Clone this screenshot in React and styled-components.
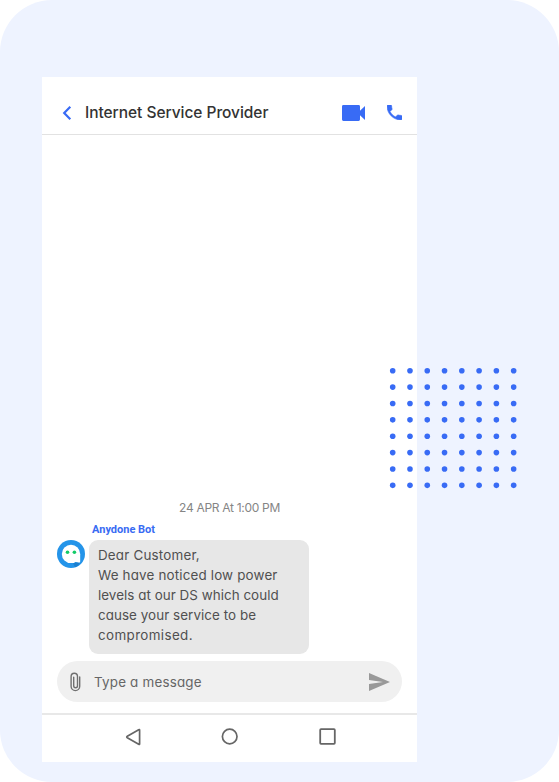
import React from "react";
import styled, { createGlobalStyle } from "styled-components";

const GlobalStyle = createGlobalStyle`
  * { box-sizing: border-box; }
  body { margin: 0; background: #fff; font-family: Inter, "Liberation Sans", sans-serif; font-feature-settings: "cv11" 1; }
  svg { display: block; }
`;

const Backdrop = styled.main`
  width: 559px;
  height: 782px;
  padding: 77px 0 0 42px;
  border-radius: 52px;
  background: #eef3ff;
  position: relative;
`;

const Phone = styled.section`
  width: 375px;
  height: 685px;
  display: flex;
  flex-direction: column;
  background: #fff;
`;

const Header = styled.header`
  height: 58px;
  flex: none;
  display: flex;
  align-items: center;
  padding: 14px 15px 0 20px;
  border-bottom: 1px solid #e2e2e2;
`;

const IconButton = styled.button`
  display: block;
  padding: 0;
  border: 0;
  background: none;
  margin-left: ${(p) => p.$gap || 0}px;
`;

const Title = styled.h1`
  flex: 1;
  margin: 0 0 0 13px;
  font-size: 15.5px;
  line-height: 22px;
  font-weight: 500;
  letter-spacing: ${(p) => p.$spacing}px;
  white-space: nowrap;
  color: #333;
`;

const Messages = styled.div`
  flex: 1;
  display: flex;
  flex-direction: column;
  justify-content: flex-end;
  padding: 0 15px 7px;
`;

const DateLabel = styled.time`
  align-self: center;
  font-size: 12px;
  line-height: 18px;
  letter-spacing: ${(p) => p.$spacing}px;
  color: #858585;
`;

const Sender = styled.div`
  margin: 5px 0 2px 35px;
  font: 700 11px/16px Roboto, sans-serif;
  letter-spacing: ${(p) => p.$spacing}px;
  color: #386bf3;
`;

const MessageRow = styled.div`
  display: flex;
  align-items: flex-start;
  gap: 4px;
`;

const Bubble = styled.div`
  width: 220px;
  height: 114px;
  padding: 5px 9px;
  border-radius: 9px;
  background: #e7e7e7;
`;

const Line = styled.div`
  font-size: 13.4px;
  line-height: 20px;
  letter-spacing: ${(p) => p.$spacing}px;
  white-space: nowrap;
  color: #505050;
`;

const Composer = styled.div`
  height: 41px;
  flex: none;
  margin: 0 15px 11px;
  padding: 0 12px 0 11px;
  display: flex;
  align-items: center;
  border-radius: 21px;
  background: #f0f0f0;
`;

const Placeholder = styled.span`
  flex: 1;
  margin-left: 12px;
  font-size: 13.4px;
  line-height: 20px;
  letter-spacing: ${(p) => p.$spacing}px;
  color: #666;
`;

const NavBar = styled.nav`
  height: 49px;
  flex: none;
  display: flex;
  align-items: center;
  justify-content: space-between;
  padding: 0 81px 4px 83px;
  border-top: 2px solid #e8e8e8;
`;

const DotPattern = styled.svg`
  position: absolute;
  left: 389px;
  top: 367px;
`;

const BackIcon = () => (
  <svg width="10" height="16" viewBox="0 0 10 16" fill="none" stroke="#386bf5" strokeWidth="2.2">
    <path d="M8.3 1.7 2.2 8l6.1 6.3" />
  </svg>
);

const VideoIcon = () => (
  <svg width="23" height="16" viewBox="0 0 23 16" fill="#386bf5">
    <path d="M1.4 0h15.2Q18 0 18 1.4v4.3L23 1v14l-5-4.7v4.3q0 1.4-1.4 1.4H1.4Q0 16 0 14.6V1.4Q0 0 1.4 0Z" />
  </svg>
);

const PhoneIcon = () => (
  <svg width="15" height="15" viewBox="3 3 18 18" fill="#386bf5" stroke="#386bf5" strokeWidth=".8">
    <path d="M6.62 10.79c1.44 2.83 3.76 5.14 6.59 6.59l2.2-2.2c.27-.27.67-.36 1.02-.24 1.12.37 2.33.57 3.57.57.55 0 1 .45 1 1V20c0 .55-.45 1-1 1C10.61 21 3 13.39 3 4c0-.55.45-1 1-1h3.5c.55 0 1 .45 1 1 0 1.25.2 2.45.57 3.57.11.35.03.74-.25 1.02z" />
  </svg>
);

const BotAvatar = () => (
  <svg width="28" height="29" viewBox="0 0 28 29">
    <circle cx="14" cy="14" r="14" fill="#2494e9" />
    <path d="M16 23.3 22 21.7l.7 1.1-1.7 3a14 14 0 0 1-3 1.4Z" fill="#1c80cf" />
    <circle cx="14" cy="13.9" r="9.2" fill="#fff" />
    <path d="M23.2 13.9v7.6q0 1.3-1.5 1.1L16 21.5Z" fill="#fff" />
    <circle cx="10.5" cy="12.2" r="1.8" fill="#12cb68" />
    <circle cx="17.4" cy="12.2" r="1.8" fill="#12cb68" />
  </svg>
);

const ClipIcon = () => (
  <svg width="14" height="20" viewBox="0 0 14 20" fill="none" stroke="#707070" strokeWidth="1.4" strokeLinecap="round">
    <path d="M11.7 5v9.3a4.3 4.3 0 0 1-8.6 0V4.4a3.2 3.2 0 0 1 6.4 0v9.4a1.9 1.9 0 0 1-3.8 0V5.3" />
  </svg>
);

const SendIcon = () => (
  <svg width="21" height="18" viewBox="0 0 21 18" fill="#999">
    <path d="M0 0 21 9 0 18v-7l14-2L0 7Z" />
  </svg>
);

const TriangleIcon = () => (
  <svg width="16" height="18" viewBox="0 0 16 18" fill="none" stroke="#666" strokeWidth="1.7" strokeLinejoin="round">
    <path d="M14.6 2.1v13.8q0 .8-.9.4L2.3 9.7q-1.1-.7 0-1.4L13.7 1.7q.9-.4.9.4Z" />
  </svg>
);

const CircleIcon = () => (
  <svg width="17" height="17" viewBox=".8 0 17 17" fill="none" stroke="#666" strokeWidth="1.7" overflow="visible">
    <circle cx="8.5" cy="8.5" r="7.3" />
  </svg>
);

const SquareIcon = () => (
  <svg width="17" height="17" viewBox="0 0 17 17" fill="none" stroke="#666" strokeWidth="1.8">
    <rect x="1.2" y="1.2" width="14.6" height="14.6" rx=".8" />
  </svg>
);

const dots = Array.from({ length: 64 }, (_, i) => ({
  cx: 3.7 + (i % 8) * 17.28,
  cy: 3.7 + Math.floor(i / 8) * 16.38,
}));

const lines = [
  { text: "Dear Customer,", spacing: 0.2 },
  { text: "We have noticed low power", spacing: 0.17 },
  { text: "levels at our DS which could", spacing: 0.04 },
  { text: "cause your service to be", spacing: 0.06 },
  { text: "compromised.", spacing: 0.38 },
];

export default function App() {
  return (
    <>
      <GlobalStyle />
      <Backdrop>
        <Phone>
          <Header>
            <IconButton aria-label="Back"><BackIcon /></IconButton>
            <Title $spacing={-0.04}>Internet Service Provider</Title>
            <IconButton aria-label="Video call"><VideoIcon /></IconButton>
            <IconButton aria-label="Call" $gap={22}><PhoneIcon /></IconButton>
          </Header>
          <Messages>
            <DateLabel $spacing={-0.3}>24 APR At 1:00 PM</DateLabel>
            <Sender $spacing={0}>Anydone Bot</Sender>
            <MessageRow>
              <BotAvatar />
              <Bubble>
                {lines.map((line) => (
                  <Line key={line.text} $spacing={line.spacing}>{line.text}</Line>
                ))}
              </Bubble>
            </MessageRow>
          </Messages>
          <Composer>
            <IconButton aria-label="Attach"><ClipIcon /></IconButton>
            <Placeholder $spacing={0.2}>Type a message</Placeholder>
            <IconButton aria-label="Send"><SendIcon /></IconButton>
          </Composer>
          <NavBar>
            <IconButton aria-label="Navigate back"><TriangleIcon /></IconButton>
            <IconButton aria-label="Home"><CircleIcon /></IconButton>
            <IconButton aria-label="Recent apps"><SquareIcon /></IconButton>
          </NavBar>
        </Phone>
        <DotPattern width="130" height="124" fill="#386bf5" aria-hidden="true">
          {dots.map((dot, i) => <circle key={i} cx={dot.cx} cy={dot.cy} r="2.8" />)}
        </DotPattern>
      </Backdrop>
    </>
  );
}
